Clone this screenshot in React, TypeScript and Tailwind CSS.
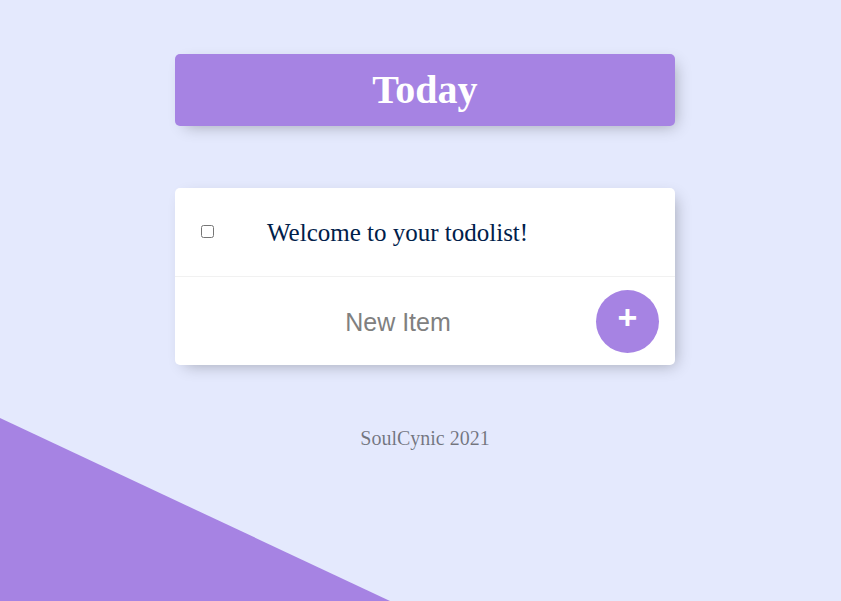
import React from "react";

export default function App() {
  return (
    <div className="relative w-[841px] h-[601px] overflow-hidden bg-[#E4E9FD] font-['Liberation_Serif',serif]">
      <svg className="absolute left-0 top-0" width="841" height="601" viewBox="0 0 841 601">
        <polygon points="0,418 390,601 0,601" fill="#A683E3" />
      </svg>
      <div className="relative flex flex-col items-center pt-[54px] pl-[9px]">
        <div className="w-[500px] h-[72px] rounded-[5px] bg-[#A683E3] flex items-center justify-center shadow-[5px_5px_15px_-5px_rgba(0,0,0,0.3)]">
          <h1 className="text-white font-bold text-[40px] leading-none">Today</h1>
        </div>
        <div className="mt-[62px] w-[500px] rounded-[5px] bg-white shadow-[5px_5px_15px_-5px_rgba(0,0,0,0.3)]">
          <div className="h-[89px] flex items-center border-b border-[#F1F1F1]">
            <input type="checkbox" className="ml-[26px] w-[13px] h-[13px] mt-[-1px]" />
            <p className="ml-[53px] text-[25px] text-[#00204a] leading-none">Welcome to your todolist!</p>
          </div>
          <div className="h-[88px] flex items-center">
            <input
              type="text"
              placeholder="New Item"
              className="ml-[20px] flex-1 h-[60px] text-center text-[25px] font-['Liberation_Sans',sans-serif] placeholder:text-[#808080] outline-none pl-[6px] pt-[2px]"
            />
            <button className="ml-[1px] mr-[16px] w-[63px] h-[63px] rounded-full bg-[#A683E3] text-white text-[34px] font-bold leading-none font-['Liberation_Sans',sans-serif] flex items-center justify-center pb-[8px]">
              +
            </button>
          </div>
        </div>
        <footer className="mt-[63px] text-[20px] text-[rgba(0,0,0,0.5)] leading-none">SoulCynic 2021</footer>
      </div>
    </div>
  );
}
